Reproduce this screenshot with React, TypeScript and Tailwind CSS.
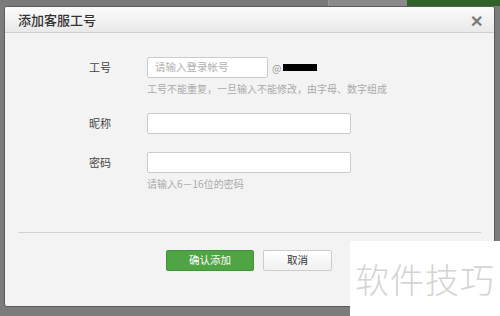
import React from "react";

const font = { fontFamily: '"Noto Sans CJK SC", "Noto Sans", sans-serif' };

export default function App() {
  return (
    <div className="relative w-[500px] h-[316px] bg-[#7c7c7c] overflow-hidden" style={font}>
      {/* top strip */}
      <div className="flex h-[6px]">
        <div className="w-[328px] bg-[#7a7a7a]" />
        <div className="w-[79px] bg-[#8a8a8a] border-l border-[#9a9a9a]" />
        <div className="flex-1 bg-[#2f6328]" />
      </div>
      {/* dialog */}
      <div className="ml-[4px] w-[491px] h-[301px] bg-[#f3f3f3] border border-[#5a5a5a] rounded-[3px] flex flex-col overflow-hidden">
        <div className="h-[26px] shrink-0 flex items-center justify-between pl-[13px] pr-[11px] border-b border-[#cfcfcf] bg-gradient-to-b from-[#fbfbfb] to-[#e9e9e9]">
          <span className="text-[13px] text-[#333] font-medium leading-none">添加客服工号</span>
          <span className="text-[16px] text-[#7a7a7a] font-bold leading-none">✕</span>
        </div>
        <div className="flex flex-col pl-[84px] pt-[24px]">
          {/* row 1 */}
          <div className="flex items-center h-[21px]">
            <span className="w-[58px] text-[11px] text-[#444]">工号</span>
            <div className="w-[121px] h-[21px] bg-white border border-[#cccccc] rounded-[2px] flex items-center pl-[7px]">
              <span className="text-[10.5px] text-[#b0b0b0] leading-none">请输入登录帐号</span>
            </div>
            <span className="ml-[4px] text-[10px] text-[#999] leading-none">@</span>
            <span className="ml-[2px] w-[34px] h-[7px] bg-black" />
          </div>
          <div className="ml-[58px] mt-[4px] text-[10px] text-[#aaaaaa] leading-[14px]">
            工号不能重复，一旦输入不能修改，由字母、数字组成
          </div>
          {/* row 2 */}
          <div className="flex items-center h-[21px] mt-[17px]">
            <span className="w-[58px] text-[11px] text-[#444]">昵称</span>
            <div className="w-[204px] h-[21px] bg-white border border-[#cccccc] rounded-[2px]" />
          </div>
          {/* row 3 */}
          <div className="flex items-center h-[21px] mt-[18px]">
            <span className="w-[58px] text-[11px] text-[#444]">密码</span>
            <div className="w-[204px] h-[21px] bg-white border border-[#cccccc] rounded-[2px]" />
          </div>
          <div className="ml-[58px] mt-[4px] text-[10px] text-[#aaaaaa] leading-[14px]">
            请输入6－16位的密码
          </div>
        </div>
        <div className="mx-[13px] mt-[41px] border-t border-[#d2d2d2]" />
        <div className="flex pl-[161px] mt-[17px] gap-[9px]">
          <div className="w-[88px] h-[21px] rounded-[2px] bg-[#4fa444] border border-[#3f9436] flex items-center justify-center">
            <span className="text-[10.5px] text-white leading-none">确认添加</span>
          </div>
          <div className="w-[69px] h-[21px] rounded-[2px] bg-gradient-to-b from-[#ffffff] to-[#f0f0f0] border border-[#cccccc] flex items-center justify-center">
            <span className="text-[10.5px] text-[#333] leading-none">取消</span>
          </div>
        </div>
      </div>
      {/* watermark */}
      <div className="absolute left-[350px] top-[241px] w-[150px] h-[75px] bg-white flex items-center pl-[5px]">
        <span className="text-[34px] text-[#d4d4d4] font-light leading-none tracking-[1px]">软件技巧</span>
      </div>
    </div>
  );
}
